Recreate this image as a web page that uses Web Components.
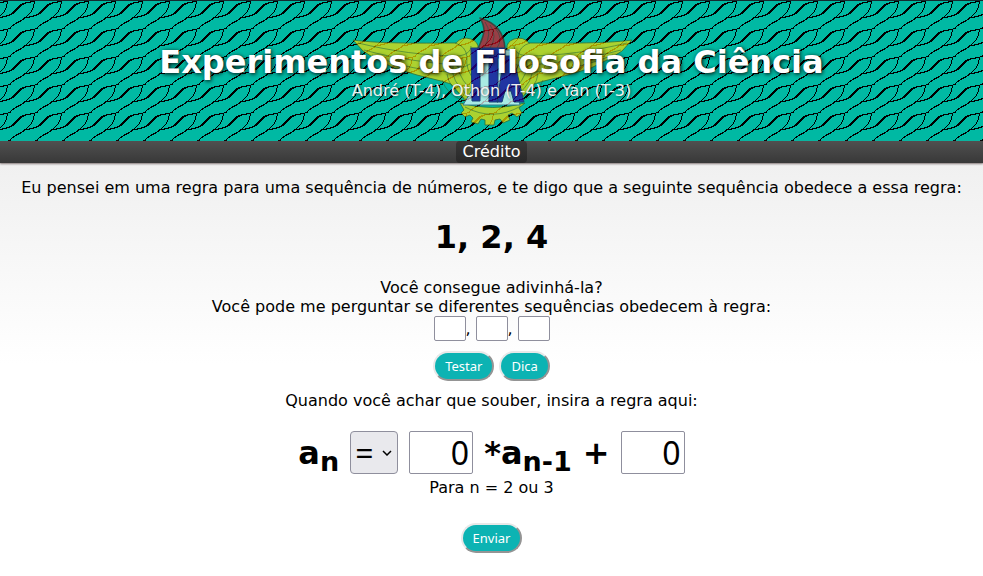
<!DOCTYPE html>
<html lang="pt-BR">
<head>
<meta charset="utf-8">
<title>Experimentos de Filosofia da Ciência</title>
<style>
body { margin: 0; font: 16px/19px "DejaVu Sans", sans-serif; color: #000; background: #fff; }
</style>
</head>
<body>
<page-shell>
  <site-header slot="header">
    <span slot="title">Experimentos de Filosofia da Ciência</span>
    <span slot="authors">André (T-4), Othon (T-4) e Yan (T-3)</span>
  </site-header>
  <nav-bar slot="nav"></nav-bar>
  <sequence-test></sequence-test>
  <rule-form></rule-form>
</page-shell>
<script>
const define = (name, html) => customElements.define(name, class extends HTMLElement {
  constructor() {
    super();
    this.attachShadow({ mode: "open" }).innerHTML = html;
  }
});

define("page-shell", `
<style>
:host { display: block; }
main { display: flex; flex-direction: column; align-items: center; text-align: center; padding: 14px 8px 20px; background: linear-gradient(#f0f0f0, #fff 200px); border-top: 1px solid #d8d4d4; }
</style>
<slot name="header"></slot><slot name="nav"></slot><main><slot></slot></main>`);

define("ita-emblem", `
<style>
:host { display: block; }
svg { display: block; width: 284px; height: 110px; opacity: .7; filter: blur(.5px); }
.line { fill: none; stroke: #40500c; stroke-opacity: .6; }
.gold { fill: #f6dd00; stroke: #40500c; stroke-opacity: .8; }
</style>
<svg viewBox="349 16 284 110" aria-hidden="true" stroke-linejoin="round">
  <g id="wing">
    <path class="gold" d="M352 40C380 44 430 43 455 43Q461 36 470 39Q478 42 477 49L476 75Q474 88 466 103L458 93L450 84L440 81L416 75L393 68L373 58L362 51Z"/>
    <path class="line" d="M357 43C390 51 425 56 458 56Q470 54 470 46M363 50C395 59 430 63 454 65Q460 70 469 64M371 55C400 67 425 71 451 72M454 43Q465 46 466 57Q464 69 474 81M458 60Q453 71 469 89M452 66Q449 81 468 96M446 74Q447 87 467 101M441 80Q446 95 463 101"/>
  </g>
  <use href="#wing" transform="matrix(-1 0 0 1 983 0)"/>
  <path class="gold" d="M459 103L463 110L460 113L464 117L469 115L472 118L470 122L477 124L480 119L484 120L484 125L493 125L494 120L499 119L502 123L509 120L507 115L511 113L516 117L521 113L518 108L524 103Q492 112 459 103Z"/>
  <path class="line" d="M464 107Q492 122 520 106"/>
  <path fill="#d80c20" stroke="#501818" stroke-width="1.5" d="M479 18Q503 25 504 49L477 49C481 38 487 31 479 18Z"/>
  <path fill="none" stroke="#501818" stroke-opacity=".7" d="M484 22Q492 33 483 48M489 25Q497 36 489 48M494 28Q503 38 496 48"/>
  <path fill="#f0ffff" stroke="#486080" d="M478 50L510 50L510 70L519 105L462 105L471 90Z"/>
  <path fill="#3000a4" stroke="#201060" d="M470 48H479V101H471Z M481 48H504V58H497V102H488V58H481Z M503 56H512L523 102H513L510 91H504L501 102H496Z"/>
</svg>`);

// Pixel runs [x, y, width, height] of the two strands in one 27x28 rope tile.
const ropeRuns = [
  [30,0,5,1],[25,1,6,1],[22,2,4,1],[20,3,4,1],[19,4,3,1],[18,5,3,1],[17,6,3,1],[16,7,3,1],[15,8,3,1],
  [14,9,3,1],[13,10,3,1],[12,11,3,1],[11,12,3,1],[9,13,3,1],[6,14,4,1],[2,15,5,1],[-1,16,4,1],
  [34,1,1,2],[33,3,1,4],[32,7,1,2],[31,9,1,2],[30,11,1,1],[29,12,1,1],[28,13,1,1],[27,14,1,1],
  [26,15,1,1],[24,16,2,1],[23,17,2,1],[22,18,2,1],[20,19,2,1],[18,20,3,1],[16,21,3,1],[15,22,2,1],
  [13,23,2,1],[12,24,2,1],[11,25,1,1],[10,26,1,1],[8,27,3,1]
];
const ropePath = ropeRuns.map(([x, y, w, h]) => `M${x} ${y}h${w}v${h}h-${w}z`).join("");

define("site-header", `
<style>
:host { display: grid; justify-items: center; position: relative; border-top: 1px solid #152a30; background: #00b9a3; color: #fff; overflow: hidden; }
.waves { position: absolute; inset: 0; width: 100%; height: 100%; }
.badge, .words { grid-area: 1 / 1; }
.badge { padding: 15px 0; position: relative; }
.words { position: relative; text-align: center; padding-top: 42px; }
h1 { margin: 0; font-size: 32px; line-height: 38px; text-shadow: 1px 1px 4px #000; }
p { margin: 0; color: #f0f0f0; text-shadow: 1px 1px 3px #0008; }
</style>
<svg class="waves" aria-hidden="true" shape-rendering="crispEdges">
  <defs><pattern id="rope" width="27" height="28" patternUnits="userSpaceOnUse">
    <path id="tile" d="${ropePath}"/><use href="#tile" x="-27"/><use href="#tile" x="27"/>
  </pattern></defs>
  <rect width="100%" height="100%" fill="url(#rope)"/>
</svg>
<ita-emblem class="badge"></ita-emblem>
<div class="words"><h1><slot name="title"></slot></h1><p><slot name="authors"></slot></p></div>`);

define("nav-bar", `
<style>
:host { display: block; }
nav { display: flex; justify-content: center; background: linear-gradient(#505050, #383838); box-shadow: 0 1px 2px #8a8080; position: relative; }
a { color: #fff; text-decoration: none; padding: 1px 7px 2px; border-radius: 4px; background: linear-gradient(#383838, #282828); }
</style>
<nav><a href="#credito">Crédito</a></nav>`);

define("pill-button", `
<style>
:host { display: inline-block; }
button { display: block; height: 30px; padding: 0 10px; border: 2px outset #e8e8e8; border-radius: 15px; background: #0cb3b3; color: #fff; font: 13px/16px "Noto Sans", sans-serif; }
</style>
<button type="button"><slot></slot></button>`);

define("sequence-test", `
<style>
:host { display: flex; flex-direction: column; align-items: center; }
p { margin: 0; }
h1 { margin: 21px 0; font-size: 32px; line-height: 39px; }
.terms { display: flex; align-items: center; }
input { box-sizing: border-box; width: 32px; height: 25px; border: 1px solid #8f8f9d; border-radius: 2px; background: #fff; padding: 1px 2px; font: inherit; }
.terms span { width: 10px; text-align: left; }
.actions { display: flex; gap: 5px; margin: 10px 0; }
</style>
<p>Eu pensei em uma regra para uma sequência de números, e te digo que a seguinte sequência obedece a essa regra:</p>
<h1>1, 2, 4</h1>
<p>Você consegue adivinhá-la?</p>
<p>Você pode me perguntar se diferentes sequências obedecem à regra:</p>
<div class="terms"><input aria-label="Primeiro termo"><span>,</span><input aria-label="Segundo termo"><span>,</span><input aria-label="Terceiro termo"></div>
<div class="actions"><pill-button>Testar</pill-button><pill-button>Dica</pill-button></div>`);

define("rule-form", `
<style>
:host { display: flex; flex-direction: column; align-items: center; }
p { margin: 0; }
.formula { display: flex; align-items: center; gap: 11px; margin: 21px 0 4px; font-size: 32px; line-height: 43px; font-weight: bold; }
.formula > span { padding-top: 2px; line-height: 41px; }
sub { font-size: 27px; line-height: 0; }
input, .op { box-sizing: border-box; height: 43px; border: 1px solid #8f8f9d; background: #fff; }
input { width: 64px; border-radius: 2px; padding: 1px 3px; text-align: right; font: 32px "Noto Sans", sans-serif; }
.op { display: grid; width: 48px; border-radius: 4px; background: #e9e9ed; }
select, .op svg { grid-area: 1 / 1; }
select { appearance: none; width: 100%; border: 0; padding: 0 4px; background: none; color: #000; font: 32px/41px "Noto Sans", sans-serif; }
.op svg { width: 10px; height: 6px; place-self: center end; margin-right: 5px; pointer-events: none; }
pill-button { margin-top: 26px; }
</style>
<p>Quando você achar que souber, insira a regra aqui:</p>
<div class="formula"><span>a<sub>n</sub></span>
<div class="op"><select aria-label="Relação"><option>=</option><option>&gt;</option><option>&lt;</option></select><svg viewBox="0 0 10 6" aria-hidden="true"><path d="M1 1L5 5L9 1" fill="none" stroke="#000" stroke-width="1.5"/></svg></div>
<input aria-label="Coeficiente" value="0"><span>*a<sub>n-1</sub> +</span><input aria-label="Constante" value="0"></div>
<p>Para n = 2 ou 3</p>
<pill-button>Enviar</pill-button>`);
</script>
</body>
</html>
